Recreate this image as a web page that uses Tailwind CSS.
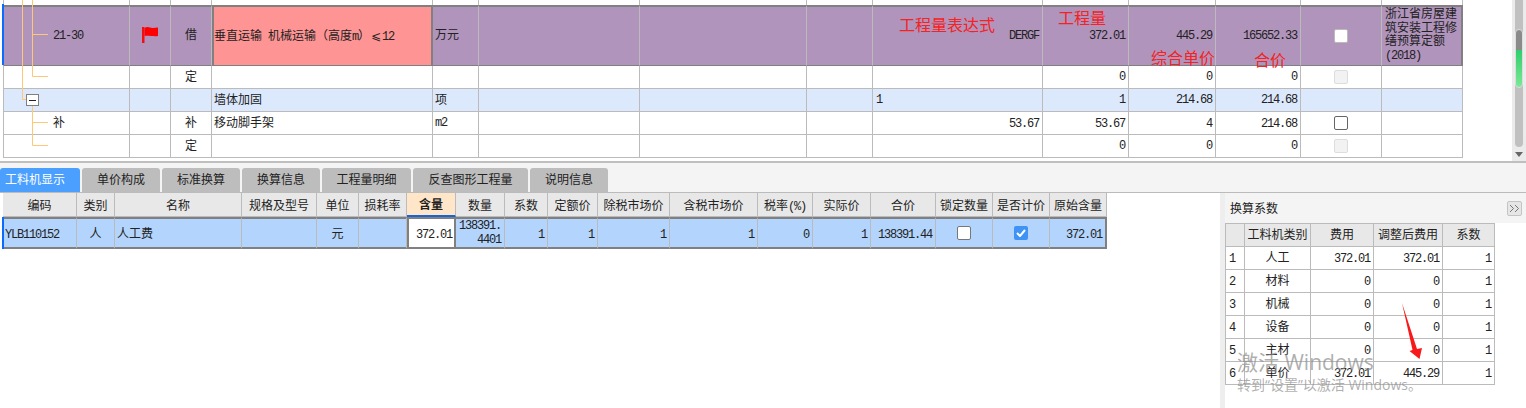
<!DOCTYPE html>
<html lang="zh">
<head>
<meta charset="UTF-8" />
<title>工料机显示</title>
<script src="https://cdn.jsdelivr.net/npm/@tailwindcss/browser@4"></script>
</head>
<body class="bg-white">
<div class="relative w-[1526px] h-[408px] overflow-hidden bg-white text-[12px] leading-[14px] text-[#222] font-['Liberation_Mono','Noto_Sans_CJK_SC',monospace]">

  <!-- upper grid -->
  <div class="flex h-[161px]">
    <div class="flex-1 pl-[3px]">
      <table class="table-fixed border-separate border-spacing-0 w-[1460px] [&_td]:border-r [&_td]:border-b [&_td]:border-[#bbbbbb] [&_td:first-child]:border-l">
        <colgroup>
          <col class="w-[127px]" /><col class="w-[41px]" /><col class="w-[41px]" /><col class="w-[221px]" /><col class="w-[46px]" /><col class="w-[161px]" /><col class="w-[167px]" /><col class="w-[66px]" /><col class="w-[170px]" /><col class="w-[86px]" /><col class="w-[87px]" /><col class="w-[85px]" /><col class="w-[81px]" /><col class="w-[81px]" />
        </colgroup>
        <tbody>
          <tr class="h-[5px] [&_td]:border-b-0">
            <td></td><td></td><td></td><td></td><td></td><td></td><td></td><td></td><td></td><td></td><td></td><td></td><td></td><td></td>
          </tr>
          <tr class="h-[61px] bg-[#b194bc] [&_td]:border-y-2 [&_td]:border-y-[#808080]">
            <td class="pl-[49px] tracking-[-1.2px]">21-30</td>
            <td></td>
            <td class="text-center">借</td>
            <td class="bg-[#ff9494] !border-x-2 !border-x-[#808080] whitespace-nowrap">垂直运输<span class="tracking-[-1.2px]"> </span>机械运输（高度<span class="tracking-[-1.2px]">m</span>）<span class="inline-block w-[12px] text-center font-['DejaVu_Sans']">⩽</span><span class="tracking-[-1.2px]">12</span></td>
            <td class="pl-[2px]">万元</td>
            <td></td><td></td><td></td>
            <td class="text-right pr-[3px] tracking-[-1.2px]">DERGF</td>
            <td class="text-right pr-[3px] tracking-[-1.2px]">372.01</td>
            <td class="text-right pr-[3px] tracking-[-1.2px]">445.29</td>
            <td class="text-right pr-[3px] tracking-[-1.2px]">165652.33</td>
            <td><div class="mx-auto size-[14px] bg-white border border-[#bbbbbb] rounded-[2px]"></div></td>
            <td class="!border-r-2 !border-r-[#808080] pl-[3px] leading-[13.5px]">浙江省房屋建筑安装工程修缮预算定额<br /><span class="tracking-[-1.2px]">(2018)</span></td>
          </tr>
          <tr class="h-[23px]">
            <td></td><td></td><td class="text-center pt-[2px]">定</td><td></td><td></td><td></td><td></td><td></td><td></td>
            <td class="text-right pr-[3px] tracking-[-1.2px]">0</td>
            <td class="text-right pr-[3px] tracking-[-1.2px]">0</td>
            <td class="text-right pr-[3px] tracking-[-1.2px]">0</td>
            <td><div class="mx-auto size-[14px] bg-[#f2f2f2] border border-[#dddddd] rounded-[2px]"></div></td>
            <td></td>
          </tr>
          <tr class="h-[23px] bg-[#dce9fd]">
            <td></td><td></td><td></td>
            <td class="pl-[2px] pt-[2px]">墙体加固</td>
            <td class="pl-[2px] pt-[2px]">项</td>
            <td></td><td></td><td></td>
            <td class="pl-[3px] tracking-[-1.2px]">1</td>
            <td class="text-right pr-[3px] tracking-[-1.2px]">1</td>
            <td class="text-right pr-[3px] tracking-[-1.2px]">214.68</td>
            <td class="text-right pr-[3px] tracking-[-1.2px]">214.68</td>
            <td></td><td></td>
          </tr>
          <tr class="h-[23px]">
            <td class="pl-[49px] pt-[2px]">补</td>
            <td></td>
            <td class="text-center pt-[2px]">补</td>
            <td class="pl-[2px] pt-[2px]">移动脚手架</td>
            <td class="pl-[2px] tracking-[-1.2px]">m2</td>
            <td></td><td></td><td></td>
            <td class="text-right pr-[3px] pt-[1px] tracking-[-1.2px]">53.67</td>
            <td class="text-right pr-[3px] pt-[1px] tracking-[-1.2px]">53.67</td>
            <td class="text-right pr-[3px] pt-[1px] tracking-[-1.2px]">4</td>
            <td class="text-right pr-[3px] pt-[1px] tracking-[-1.2px]">214.68</td>
            <td><div class="mx-auto size-[14px] bg-white border border-[#666666] rounded-[2px]"></div></td>
            <td></td>
          </tr>
          <tr class="h-[23px]">
            <td></td><td></td><td class="text-center pt-[2px]">定</td><td></td><td></td><td></td><td></td><td></td><td></td>
            <td class="text-right pr-[3px] tracking-[-1.2px]">0</td>
            <td class="text-right pr-[3px] tracking-[-1.2px]">0</td>
            <td class="text-right pr-[3px] tracking-[-1.2px]">0</td>
            <td><div class="mx-auto size-[14px] bg-[#f2f2f2] border border-[#dddddd] rounded-[2px]"></div></td>
            <td></td>
          </tr>
        </tbody>
      </table>
    </div>
    <!-- scrollbar -->
    <div class="relative w-[14px] bg-[#ebebeb]">
      <div class="absolute left-[3px] top-0 w-[8px] h-[147px] bg-[#c0c0c0] rounded-b-[4px]"></div>
      <div class="absolute left-[3px] top-[29px] w-[8px] h-[59px] rounded-[4px] border border-[#dddddd] bg-[linear-gradient(to_bottom,#8a8a8a_0,#8a8a8a_35%,#2fce6c_35%,#7ce896_100%)]"></div>
      <svg class="absolute left-[3px] top-[152px]" width="8" height="5"><path d="M0 0h8L4 5z" fill="#666666" /></svg>
    </div>
  </div>

  <!-- tabs -->
  <div class="flex items-end gap-[2px] h-[32px] pb-[1px] border-t-2 border-[#bfbfbf] bg-[#f4f4f4] shadow-[inset_0_-1px_0_#bbbbbb]">
    <div class="w-[80px] h-[24px] flex items-center pl-[5px] pt-[2px] rounded-t-[3px] bg-[#4a9fff] text-white">工料机显示</div>
    <div class="w-[78px] h-[24px] flex items-center justify-center pt-[2px] rounded-t-[3px] bg-[#bdbdbd]">单价构成</div>
    <div class="w-[78px] h-[24px] flex items-center justify-center pt-[2px] rounded-t-[3px] bg-[#bdbdbd]">标准换算</div>
    <div class="w-[78px] h-[24px] flex items-center justify-center pt-[2px] rounded-t-[3px] bg-[#bdbdbd]">换算信息</div>
    <div class="w-[89px] h-[24px] flex items-center justify-center pt-[2px] rounded-t-[3px] bg-[#bdbdbd]">工程量明细</div>
    <div class="w-[115px] h-[24px] flex items-center justify-center pt-[2px] rounded-t-[3px] bg-[#bdbdbd]">反查图形工程量</div>
    <div class="w-[78px] h-[24px] flex items-center justify-center pt-[2px] rounded-t-[3px] bg-[#bdbdbd]">说明信息</div>
  </div>

  <!-- lower area -->
  <div class="flex h-[215px]">
    <div class="w-[1220px] pl-[3px]">
      <table class="table-fixed border-separate border-spacing-0 w-[1104px] [&_th]:border-r [&_th]:border-b [&_th]:border-[#bbbbbb] [&_th]:font-normal [&_th]:bg-[#e8e8e8] [&_th]:pt-[4px] [&_td]:border-r [&_td]:border-[#bbbbbb] [&_td]:border-y-2 [&_td]:border-y-[#808080] [&_td]:pt-[4px]">
        <colgroup>
          <col class="w-[74px]" /><col class="w-[38px]" /><col class="w-[127px]" /><col class="w-[75px]" /><col class="w-[42px]" /><col class="w-[48px]" /><col class="w-[49px]" /><col class="w-[49px]" /><col class="w-[43px]" /><col class="w-[50px]" /><col class="w-[72px]" /><col class="w-[88px]" /><col class="w-[55px]" /><col class="w-[58px]" /><col class="w-[65px]" /><col class="w-[57px]" /><col class="w-[57px]" /><col class="w-[57px]" />
        </colgroup>
        <thead>
          <tr class="h-[24px]">
            <th>编码</th><th>类别</th><th>名称</th><th>规格及型号</th><th>单位</th><th>损耗率</th>
            <th class="!bg-[#ffe6c8] !font-bold !border-b-2 !border-b-[#1565d8]">含量</th>
            <th>数量</th><th>系数</th><th>定额价</th><th>除税市场价</th><th>含税市场价</th><th>税率<span class="tracking-[-1.2px]">(%)</span></th><th>实际价</th><th>合价</th><th>锁定数量</th><th>是否计价</th><th>原始含量</th>
          </tr>
        </thead>
        <tbody>
          <tr class="h-[32px] bg-[#b3d5fd]">
            <td class="pl-[2px] tracking-[-1.2px]">YLB110152</td>
            <td class="text-center">人</td>
            <td class="pl-[2px]">人工费</td>
            <td></td>
            <td class="text-center">元</td>
            <td></td>
            <td class="bg-white !border-x-2 !border-x-[#808080] text-right pr-[2px] tracking-[-1.2px]">372.01</td>
            <td class="!pt-0 text-right pr-[3px] tracking-[-1.2px]">138391.<br />4401</td>
            <td class="text-right pr-[3px] tracking-[-1.2px]">1</td>
            <td class="text-right pr-[3px] tracking-[-1.2px]">1</td>
            <td class="text-right pr-[3px] tracking-[-1.2px]">1</td>
            <td class="text-right pr-[3px] tracking-[-1.2px]">1</td>
            <td class="text-right pr-[3px] tracking-[-1.2px]">0</td>
            <td class="text-right pr-[3px] tracking-[-1.2px]">1</td>
            <td class="text-right pr-[3px] tracking-[-1.2px]">138391.44</td>
            <td class="!pt-0"><div class="mx-auto size-[14px] bg-white border border-[#777777] rounded-[2px]"></div></td>
            <td class="!pt-0"><div class="mx-auto size-[14px] flex items-center justify-center bg-[#3f93f5] rounded-[2px]"><svg width="10" height="8" viewBox="0 0 10 8"><path d="M1 4l3 3 5-6" fill="none" stroke="#ffffff" stroke-width="2" /></svg></div></td>
            <td class="!border-r-2 !border-r-[#808080] text-right pr-[3px] tracking-[-1.2px]">372.01</td>
          </tr>
        </tbody>
      </table>
    </div>

    <!-- conversion coefficients -->
    <div class="flex-1 border-l-[5px] border-[#eeeeee]">
      <div class="flex items-center justify-between h-[30px] bg-[#f4f4f4] pl-[5px] pr-[4px]">
        <span class="mt-[4px]">换算系数</span>
        <div class="size-[15px] flex items-center justify-center bg-[#e6e6e6] border border-[#c4c4c4] rounded-[2px]">
          <svg width="11" height="9" viewBox="0 0 11 9"><path d="M1 1l3.5 3.5L1 8M6 1l3.5 3.5L6 8" fill="none" stroke="#777777" /></svg>
        </div>
      </div>
      <table class="table-fixed border-separate border-spacing-0 w-[270px] [&_th]:border-r [&_th]:border-y [&_th]:border-[#bbbbbb] [&_th]:font-normal [&_th]:bg-[#e8e8e8] [&_th]:pt-[2px] [&_td]:border-r [&_td]:border-b [&_td]:border-[#bbbbbb] [&_td]:h-[23px] [&_td]:pt-[1px] [&_tr>*:first-child]:border-l">
        <colgroup>
          <col class="w-[20px]" /><col class="w-[66px]" /><col class="w-[63px]" /><col class="w-[69px]" /><col class="w-[52px]" />
        </colgroup>
        <thead>
          <tr class="h-[24px]"><th></th><th>工料机类别</th><th>费用</th><th>调整后费用</th><th>系数</th></tr>
        </thead>
        <tbody>
          <tr><td class="pl-[3px] tracking-[-1.2px]">1</td><td class="text-center">人工</td><td class="text-right pr-[3px] tracking-[-1.2px]">372.01</td><td class="text-right pr-[3px] tracking-[-1.2px]">372.01</td><td class="text-right pr-[3px] tracking-[-1.2px]">1</td></tr>
          <tr><td class="pl-[3px] tracking-[-1.2px]">2</td><td class="text-center">材料</td><td class="text-right pr-[3px] tracking-[-1.2px]">0</td><td class="text-right pr-[3px] tracking-[-1.2px]">0</td><td class="text-right pr-[3px] tracking-[-1.2px]">1</td></tr>
          <tr><td class="pl-[3px] tracking-[-1.2px]">3</td><td class="text-center">机械</td><td class="text-right pr-[3px] tracking-[-1.2px]">0</td><td class="text-right pr-[3px] tracking-[-1.2px]">0</td><td class="text-right pr-[3px] tracking-[-1.2px]">1</td></tr>
          <tr><td class="pl-[3px] tracking-[-1.2px]">4</td><td class="text-center">设备</td><td class="text-right pr-[3px] tracking-[-1.2px]">0</td><td class="text-right pr-[3px] tracking-[-1.2px]">0</td><td class="text-right pr-[3px] tracking-[-1.2px]">1</td></tr>
          <tr><td class="pl-[3px] tracking-[-1.2px]">5</td><td class="text-center">主材</td><td class="text-right pr-[3px] tracking-[-1.2px]">0</td><td class="text-right pr-[3px] tracking-[-1.2px]">0</td><td class="text-right pr-[3px] tracking-[-1.2px]">1</td></tr>
          <tr><td class="pl-[3px] tracking-[-1.2px]">6</td><td class="text-center">单价</td><td class="text-right pr-[3px] tracking-[-1.2px]">372.01</td><td class="text-right pr-[3px] tracking-[-1.2px]">445.29</td><td class="text-right pr-[3px] tracking-[-1.2px]">1</td></tr>
        </tbody>
      </table>
    </div>
  </div>

  <!-- overlays: tree lines, flag, selection bars -->
  <svg class="absolute left-0 top-0 pointer-events-none" width="170" height="160">
    <g fill="none" stroke="#ffc878" stroke-width="1">
      <path d="M22.5 0V99.5H26" />
      <path d="M32.5 0V76.5H48M32.5 34.5H48" />
      <path d="M32.5 105V145.5H48M32.5 122.5H48" />
    </g>
    <rect x="26.5" y="94.5" width="12" height="11" fill="#ffffff" stroke="#808080" />
    <path d="M29 100.5h7" stroke="#222222" />
    <path d="M142 27h2.5v16h-2.5z" fill="#f01010" />
    <path d="M144.5 28c4-2 5 0 8 0l5.500-.5v8.500c-3 .5-5 0-7 0s-4-.5-6.500 0z" fill="#ff0000" />
  </svg>
  <div class="absolute left-[2px] top-[4px] w-[2px] h-[61px] bg-[#0a6cff]"></div>
  <div class="absolute left-[2px] top-[217px] w-[2px] h-[32px] bg-[#0a6cff]"></div>

  <!-- red annotations -->
  <span class="absolute left-[899px] top-[14px] text-[16px] leading-[20px] text-[#f42222] font-['Noto_Sans_CJK_SC',sans-serif]">工程量表达式</span>
  <span class="absolute left-[1058px] top-[7px] text-[16px] leading-[20px] text-[#f42222] font-['Noto_Sans_CJK_SC',sans-serif]">工程量</span>
  <span class="absolute left-[1151px] top-[47px] text-[16px] leading-[20px] text-[#f42222] font-['Noto_Sans_CJK_SC',sans-serif]">综合单价</span>
  <span class="absolute left-[1254px] top-[49px] text-[16px] leading-[20px] text-[#f42222] font-['Noto_Sans_CJK_SC',sans-serif]">合价</span>

  <!-- red arrow -->
  <svg class="absolute left-[1400px] top-[300px]" width="26" height="62">
    <path d="M2 3L17 49L22 48L19.500 59L9.500 51L12.500 50Z" fill="#f81a1a" />
  </svg>

  <!-- activation watermark -->
  <div class="absolute left-[1237px] top-[349px] text-[#8c8c8c]/70 font-['Open_Sans','Noto_Sans_CJK_SC',sans-serif] pointer-events-none">
    <p class="text-[21px] leading-[26px]">激活 Windows</p>
    <p class="text-[14px] leading-[20px]">转到“设置”以激活 Windows。</p>
  </div>
</div>
</body>
</html>
